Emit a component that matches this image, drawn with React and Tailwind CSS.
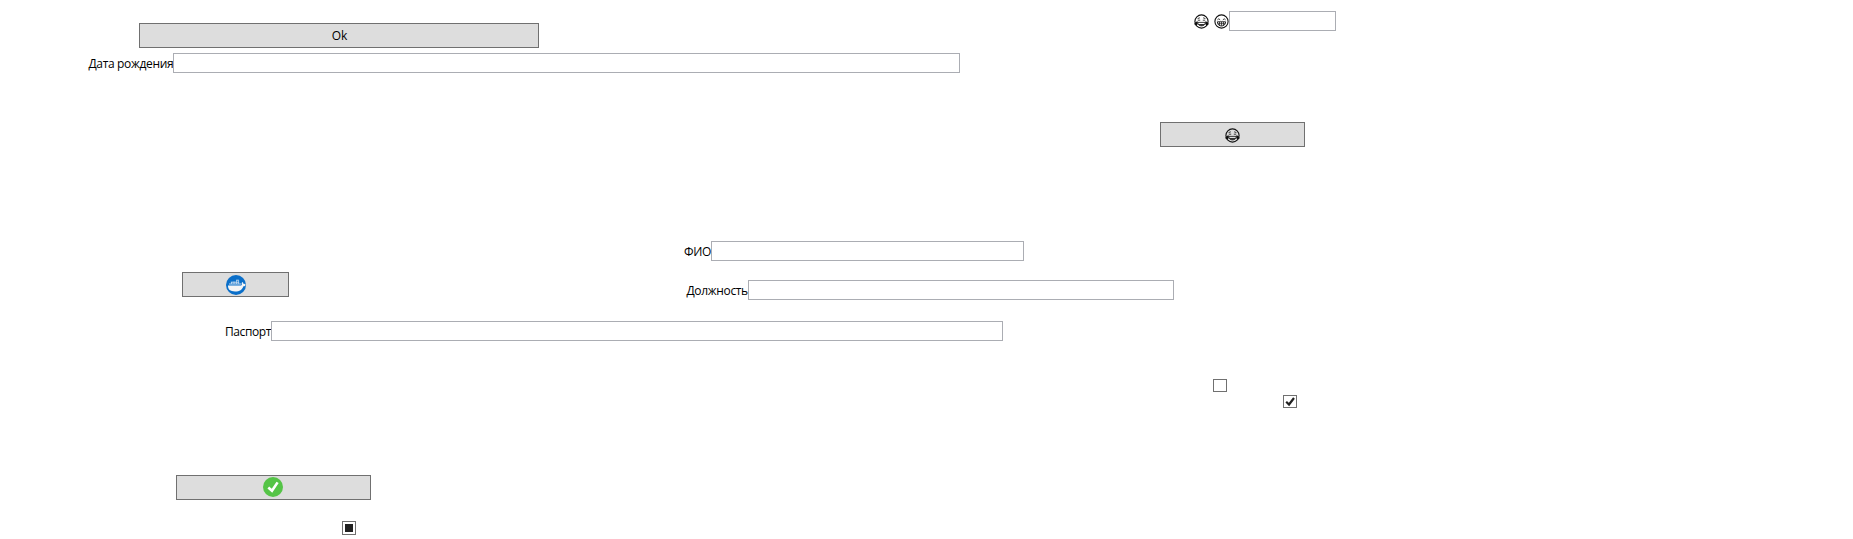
import React from "react";

function Field({ label, labelClass, inputClass }) {
  return (
    <label className="flex h-5 items-start">
      <span className={`flex h-5 shrink-0 items-center pt-0.5 text-xs leading-4 whitespace-nowrap ${labelClass}`}>{label}</span>
      <input type="text" className={`h-5 shrink-0 border border-[#abadb3] bg-white px-1 text-xs outline-none ${inputClass}`} />
    </label>
  );
}

function PushButton({ className, children }) {
  return (
    <button type="button" className={`flex h-[25px] shrink-0 items-center justify-center border border-[#707070] bg-[#dddddd] text-xs ${className}`}>
      {children}
    </button>
  );
}

function JoyFace({ className }) {
  return (
    <svg viewBox="0 0 15 15" className={`size-[15px] shrink-0 ${className}`} fill="none" stroke="#111">
      <circle cx="7.5" cy="7.5" r="6.6" strokeWidth="1.1" />
      <path d="M3.6 4.6 5.9 3.8M9.1 3.8l2.3.8M3.8 6.2h2.4M8.8 6.2h2.4" strokeWidth=".8" />
      <path d="M3.6 7.2C1.6 7.6.2 8.8.5 10.3c.3 1.4 2.4 1.5 3 .2.4-1 .3-2.2.1-3.3zM11.4 7.2c2 .4 3.4 1.6 3.1 3.1-.3 1.4-2.4 1.5-3 .2-.4-1-.3-2.2-.1-3.3z" fill="#111" stroke="none" />
      <path d="M3.8 8.4h7.4c0 2.2-1.6 3.5-3.7 3.5s-3.7-1.3-3.7-3.5z" strokeWidth=".8" />
      <path d="M4.2 10.1h6.6c-.6 1.2-1.8 1.9-3.3 1.9s-2.7-.7-3.3-1.9z" fill="#333" stroke="none" />
    </svg>
  );
}

function GrinFace({ className }) {
  return (
    <svg viewBox="0 0 15 15" className={`size-[15px] shrink-0 ${className}`} fill="none" stroke="#111">
      <circle cx="7.5" cy="7.5" r="6.6" strokeWidth="1.1" />
      <path d="M3.4 5.9q1.4-2.2 2.8 0M8.8 5.9q1.4-2.2 2.8 0" strokeWidth=".8" />
      <path d="M3.4 7.8h8.2c0 2.6-1.8 4.2-4.1 4.2S3.4 10.4 3.4 7.8z" strokeWidth=".9" />
      <path d="M3.7 9.7h7.6M5.5 7.8v3.8M7.5 7.8v4M9.5 7.8v3.8" strokeWidth=".7" />
    </svg>
  );
}

function WhaleIcon() {
  return (
    <svg viewBox="0 0 20 20" className="size-5">
      <circle cx="10" cy="10" r="10" fill="#0b6fc9" />
      <path d="M2 10.6h12.4c.9 0 1.5-.4 1.4-1.1-.3-1-.1-1.7.5-2.4.8.5 1.1 1.1 1.2 1.8.9-.2 1.5 0 2 .4l-.2 1.4c-.6.4-1.2.5-1.9.5-1.3 3.6-3.6 5.3-8.3 5.3-4.9 0-7.2-1.9-7.1-5.9z" fill="#f5f5f5" />
      <path d="M3 9h12M4.8 7.2h8.4M10.5 5.2h2" stroke="#dce9f5" strokeWidth=".9" fill="none" />
      <path d="M5.5 7v2M8 6.5v2.5M10.5 4.8V9M12.6 4.8V9" stroke="#dce9f5" strokeWidth=".6" fill="none" />
    </svg>
  );
}

function SuccessIcon() {
  return (
    <svg viewBox="0 0 20 20" className="size-5">
      <circle cx="10" cy="10" r="10" fill="#55c447" />
      <path d="M5.3 10.5 9 13.8 14.6 5.4" fill="none" stroke="#fff" strokeWidth="2.6" />
    </svg>
  );
}

function CheckBox({ state, className }) {
  return (
    <span role="checkbox" aria-checked={state} className={`flex w-3.5 shrink-0 items-center justify-center border border-[#707070] bg-white ${className}`}>
      {state === "true" && (
        <svg viewBox="0 0 12 11" className="h-[11px] w-3">
          <path d="M2.2 5.8 5 8.5 10 2" fill="none" stroke="#212121" strokeWidth="2.2" />
        </svg>
      )}
      {state === "mixed" && <span className="size-2 bg-[#212121]" />}
    </span>
  );
}

export default function App() {
  return (
    <main className="flex h-[539px] w-[1853px] flex-col overflow-hidden bg-white font-['Open_Sans','Noto_Sans',sans-serif] text-black">
      <section className="flex h-[241px] shrink-0">
        <div className="flex w-[1160px] shrink-0 flex-col items-start pt-[23px]">
          <PushButton className="ml-[139px] w-[400px] pt-px pl-px">Ok</PushButton>
          <div className="mt-[5px]">
            <Field label="Дата рождения" labelClass="w-[173px] pl-[88.5px] tracking-[-0.34px]" inputClass="w-[787px]" />
          </div>
        </div>
        <div className="flex flex-col items-start pt-[11px]">
          <div className="flex h-5">
            <JoyFace className="mt-[3px] ml-[34px]" />
            <GrinFace className="mt-[3px] ml-[5px]" />
            <input type="text" className="h-5 w-[107px] border border-[#abadb3] bg-white px-1 text-xs outline-none" />
          </div>
          <PushButton className="mt-[91px] w-[145px]">
            <JoyFace className="mt-0.5" />
          </PushButton>
        </div>
      </section>

      <section className="flex h-20 shrink-0">
        <div className="w-[600px] shrink-0 pt-[31px] pl-[182px]">
          <PushButton className="w-[107px]">
            <WhaleIcon />
          </PushButton>
        </div>
        <div className="flex flex-col gap-[19px]">
          <Field label="ФИО" labelClass="w-[111px] justify-end tracking-[-0.3px]" inputClass="w-[313px]" />
          <Field label="Должность" labelClass="w-[148px] pl-[86.5px] tracking-[-0.34px]" inputClass="w-[426px]" />
        </div>
      </section>

      <section className="h-[58px] shrink-0">
        <Field label="Паспорт" labelClass="w-[271px] justify-end tracking-[-0.4px]" inputClass="w-[732px]" />
      </section>

      <section className="flex h-[160px] shrink-0">
        <div className="flex w-[1213px] shrink-0 flex-col items-start pt-24">
          <PushButton className="ml-[176px] w-[195px] pr-px pb-px">
            <SuccessIcon />
          </PushButton>
          <CheckBox state="mixed" className="mt-[21px] ml-[342px] h-3.5" />
        </div>
        <div className="flex flex-col items-start gap-[3px]">
          <CheckBox state="false" className="h-[13px]" />
          <CheckBox state="true" className="ml-[70px] h-[13px]" />
        </div>
      </section>
    </main>
  );
}
